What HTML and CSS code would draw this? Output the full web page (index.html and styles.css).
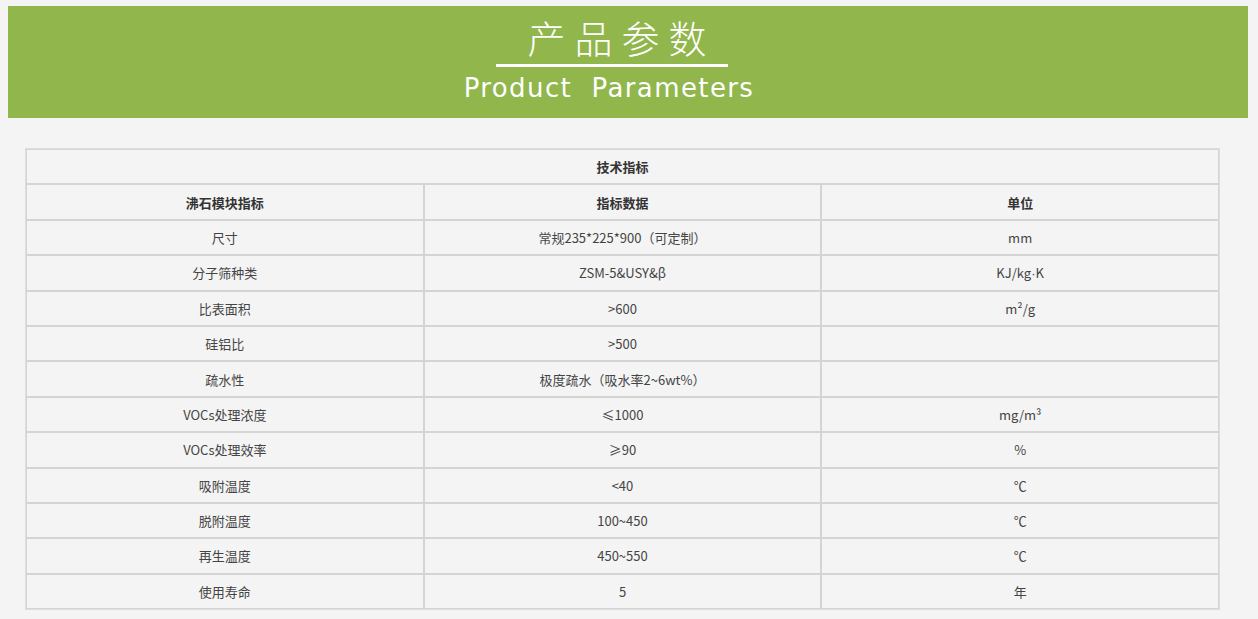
FILE: index.html
```html
<!DOCTYPE html>
<html lang="zh-CN">
<head>
<meta charset="utf-8">
<title>产品参数</title>
<link rel="stylesheet" href="styles.css">
</head>
<body>
<header class="banner">
  <h1 class="banner-cn">产品参数</h1>
  <div class="banner-line"></div>
  <p class="banner-en">Product&nbsp;&nbsp;Parameters</p>
</header>
<table class="spec">
  <tr><th colspan="3">技术指标</th></tr>
  <tr><th>沸石模块指标</th><th>指标数据</th><th>单位</th></tr>
  <tr><td>尺寸</td><td>常规235*225*900（可定制）</td><td>mm</td></tr>
  <tr><td>分子筛种类</td><td>ZSM-5&amp;USY&amp;β</td><td>KJ/kg<span class="latin">·</span>K</td></tr>
  <tr><td>比表面积</td><td>&gt;600</td><td>m²/g</td></tr>
  <tr><td>硅铝比</td><td>&gt;500</td><td></td></tr>
  <tr><td>疏水性</td><td>极度疏水（吸水率2~6wt%）</td><td></td></tr>
  <tr><td>VOCs处理浓度</td><td>≤1000</td><td>mg/m³</td></tr>
  <tr><td>VOCs处理效率</td><td>≥90</td><td>%</td></tr>
  <tr><td>吸附温度</td><td>&lt;40</td><td>℃</td></tr>
  <tr><td>脱附温度</td><td>100~450</td><td>℃</td></tr>
  <tr><td>再生温度</td><td>450~550</td><td>℃</td></tr>
  <tr><td>使用寿命</td><td>5</td><td>年</td></tr>
</table>
</body>
</html>
```
FILE: styles.css
```css
html, body {
  margin: 0;
  padding: 0;
  background: #f4f4f4;
}
body {
  padding: 6px 0 0 8px;
  font-family: "Noto Sans CJK SC", "Liberation Sans", sans-serif;
}
.banner {
  width: 1240px;
  height: 112px;
  background: #91b64b;
  display: flex;
  flex-direction: column;
  align-items: center;
  box-sizing: border-box;
  padding-top: 11px;
  padding-right: 32px;
}
.banner-cn {
  margin: 0;
  color: #fff;
  font-weight: 300;
  font-size: 38px;
  line-height: 40px;
  letter-spacing: 9px;
  padding-left: 19px;
}
.banner-line {
  width: 232px;
  height: 3px;
  background: #fff;
  margin-top: 7px;
}
.banner-en {
  margin: 6px 0 0;
  color: #fff;
  font-family: "DejaVu Sans", sans-serif;
  font-size: 26px;
  line-height: 30px;
  letter-spacing: 1.4px;
  padding-right: 6px;
}
.spec {
  margin: 30px 0 0 17px;
  width: 1195px;
  border: 1px solid #dedede;
  border-collapse: separate;
  border-spacing: 0;
  table-layout: fixed;
  font-size: 13px;
  color: #333;
}
.spec th, .spec td {
  border: 1px solid #d4d4d4;
  height: 33.4px;
  padding: 0;
  text-align: center;
  vertical-align: middle;
  line-height: 17px;
}
.spec th {
  font-weight: bold;
  color: #333;
}
.spec td {
  color: #444;
}
.latin {
  font-family: "Liberation Sans", sans-serif;
}
```
